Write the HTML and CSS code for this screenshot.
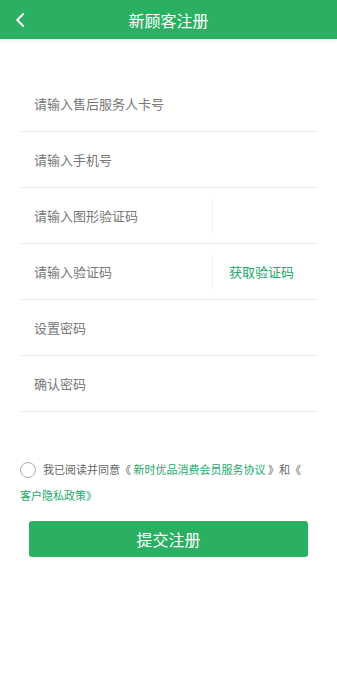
FILE: index.html
```html
<!DOCTYPE html>
<html lang="zh-CN">
  <head>
    <meta charset="UTF-8" />
    <meta name="viewport" content="width=device-width, initial-scale=1.0" />
    <title>新顾客注册</title>
    <link rel="stylesheet" href="styles.css">
  </head>
  <body>
    <div class="app">
      <div class="header">
        <a class="back">
          <svg viewBox="0 0 24 24">
            <path d="M15 4 L7 12 L15 20" fill="none" stroke="#fff" stroke-width="2.6" stroke-linecap="round" stroke-linejoin="round" />
          </svg>
        </a>
        <h1>新顾客注册</h1>
      </div>

      <div class="form">
        <div class="row"><span class="placeholder">请输入售后服务人卡号</span></div>
        <div class="row"><span class="placeholder">请输入手机号</span></div>
        <div class="row">
          <span class="placeholder">请输入图形验证码</span>
          <div class="side"></div>
        </div>
        <div class="row">
          <span class="placeholder">请输入验证码</span>
          <div class="side"><span class="code_btn">获取验证码</span></div>
        </div>
        <div class="row"><span class="placeholder">设置密码</span></div>
        <div class="row"><span class="placeholder">确认密码</span></div>
      </div>

      <div class="agree">
        <span class="radio"></span>我已阅读并同意《 <span class="link">新时优品消费会员服务协议</span> 》和《<br><span class="link">客户隐私政策》</span>
      </div>

      <div class="submit_wrap">
        <button class="submit">提交注册</button>
      </div>
    </div>
  </body>
</html>
```

FILE: styles.css
```css
* {
  box-sizing: border-box;
  padding: 0;
  margin: 0;
}
body {
  font-family: "Noto Sans CJK SC", "Noto Sans", sans-serif;
  background: #fff;
}
.app {
  min-height: 100vh;
}
.header {
  height: 39px;
  background: #2bb063;
  display: flex;
  align-items: center;
  justify-content: center;
  position: relative;
  box-shadow: 0 2px 4px rgba(0, 0, 0, 0.08);
}
.header h1 {
  color: #fff;
  font-size: 16px;
  font-weight: 400;
}
.back {
  position: absolute;
  left: 12px;
  top: 10px;
  width: 18px;
  height: 18px;
}
.back svg {
  width: 18px;
  height: 18px;
}
.form {
  margin: 37px 19px 0 20px;
}
.row {
  height: 56px;
  display: flex;
  align-items: center;
  border-bottom: 1px solid #ececec;
  padding-left: 14px;
  font-size: 13px;
  color: #777;
}
.placeholder {
  flex: 1;
}
.side {
  width: 106px;
  height: 34px;
  border-left: 1px solid #efefef;
  display: flex;
  align-items: center;
  padding-left: 16px;
}
.code_btn {
  color: #24a86a;
  font-size: 13px;
}
.agree {
  margin: 44px 15px 0 20px;
  font-size: 11px;
  color: #666;
  line-height: 26px;
}
.radio {
  display: inline-block;
  width: 16px;
  height: 16px;
  border: 1px solid #aaa;
  border-radius: 50%;
  vertical-align: -4px;
  margin-right: 7px;
}
.link {
  color: #24a86a;
}
.submit_wrap {
  padding: 13px 29px 0 29px;
}
.submit {
  width: 100%;
  height: 36px;
  border: none;
  border-radius: 3px;
  background: #2bb063;
  color: #fff;
  font-family: inherit;
  font-size: 16px;
}
```
